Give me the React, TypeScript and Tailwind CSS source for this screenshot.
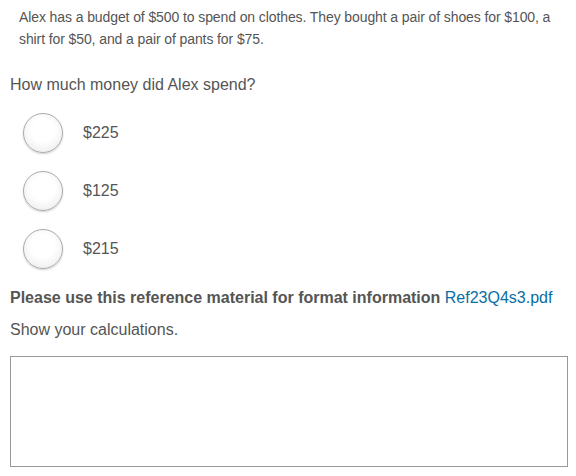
import React, { useState } from "react";

const options = ["$225", "$125", "$215"];

const App = () => {
  const [picked, setPicked] = useState<string | null>(null);
  const [work, setWork] = useState("");

  return (
    <main className="min-h-screen bg-white px-[10px] pt-[6px] font-['Liberation_Sans',Arial,sans-serif] text-[#555]">
      {/* Problem text */}
      <p className="pl-[9px] pr-[6px] text-[14px] leading-[22px] tracking-[-0.1px] text-[#555]">
        Alex has a budget of $500 to spend on clothes. They bought a pair of shoes for $100, a shirt for $50, and a pair of pants for $75.
      </p>

      {/* Question */}
      <h2 className="mt-[25px] text-[16px] leading-[20px] text-[#555]">How much money did Alex spend?</h2>

      {/* Options */}
      <div className="mt-[18px] ml-[13px] flex flex-col gap-[18px]">
        {options.map((opt) => (
          <label key={opt} className="flex cursor-pointer items-center gap-[20px]">
            <input
              type="radio"
              name="answer"
              checked={picked === opt}
              onChange={() => setPicked(opt)}
              className="sr-only"
            />
            <span className="flex h-[40px] w-[40px] items-center justify-center rounded-full border border-[#ababab] bg-[radial-gradient(circle_at_50%_42%,#ffffff_40%,#f3f3f3_70%,#d8d8d8_100%)] shadow-[0_1px_2px_rgba(0,0,0,0.18)]">
              {picked === opt && <span className="h-[16px] w-[16px] rounded-full bg-[#0073a8]" />}
            </span>
            <span className="text-[16px] text-[#555]">{opt}</span>
          </label>
        ))}
      </div>

      {/* Reference line */}
      <p className="mt-[19px] text-[16px] leading-[20px]">
        <span className="font-bold text-[#555]">Please use this reference material for format information </span>
        <a href="#" className="text-[#0a6ea3]">Ref23Q4s3.pdf</a>
      </p>

      <p className="mt-[12px] text-[16px] leading-[20px] text-[#555]">Show your calculations.</p>

      <textarea
        value={work}
        onChange={(e) => setWork(e.target.value)}
        className="mt-[16px] block h-[111px] w-[558px] resize-none border border-[#999] p-2 text-[14px] outline-none"
      />
    </main>
  );
};

export default App;
